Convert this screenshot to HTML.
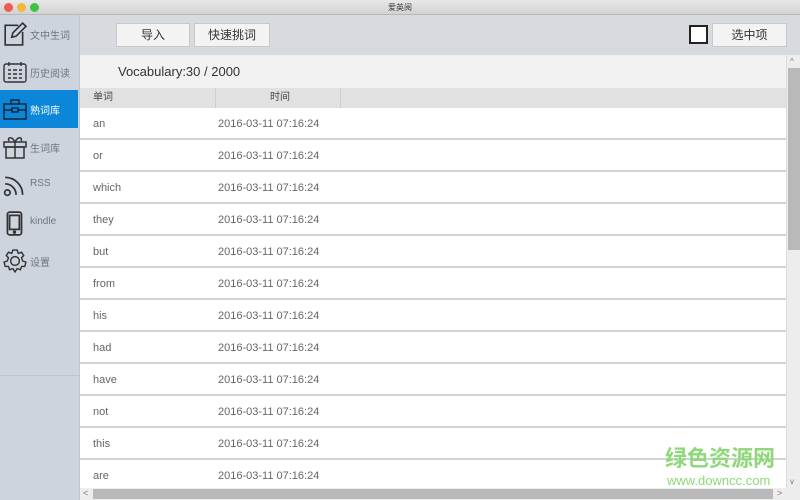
<!DOCTYPE html>
<html><head><meta charset="utf-8"><style>
*{margin:0;padding:0;box-sizing:border-box}
body{width:800px;height:500px;overflow:hidden;font-family:"Liberation Sans","Noto Sans CJK SC",sans-serif;background:#fff;position:relative}
.title{position:absolute;left:0;top:0;width:800px;height:15px;background:linear-gradient(#e8e8e8,#d2d2d2);border-bottom:1px solid #b8b8b8;text-align:center;font-size:8px;line-height:15px;color:#333}
.dot{position:absolute;top:3px;width:9px;height:9px;border-radius:50%}
.side{position:absolute;left:0;top:15px;width:80px;height:485px;background:#cdd4dd;border-right:1px solid #bfc6cf}
.item{position:absolute;left:0;width:78px;height:38px;font-size:10px;color:#6f757c}
.item svg{position:absolute;left:3px;top:7px}
.item span{position:absolute;left:30px;top:12px}
.sel{background:#0c86d9;color:#fff}
.tb{position:absolute;left:80px;top:15px;width:720px;height:40px;background:#d7dbdf}
.btn{position:absolute;top:8px;height:24px;background:#f3f3f3;border:1px solid #c9c9c9;font-size:12px;color:#333;text-align:center;line-height:22px}
.vh{position:absolute;left:80px;top:55px;width:706px;height:33px;background:#f2f2f2;font-size:13px;color:#333;padding:9px 0 0 38px}
.th{position:absolute;left:80px;top:88px;width:706px;height:20px;background:#e1e1e1;font-size:10px;color:#444;line-height:20px}
.row{position:absolute;left:80px;width:706px;height:32px;border-bottom:2px solid #d2d2d2;font-size:11px;color:#666;line-height:32px;background:#fff}
.row b{font-weight:normal;position:absolute;left:13px}
.row i{font-style:normal;position:absolute;left:138px}
</style></head><body>
<div class="title">爱英阅
<div class="dot" style="left:4px;background:#ed5b55"></div>
<div class="dot" style="left:17px;background:#f4b73b"></div>
<div class="dot" style="left:30px;background:#3fc345"></div></div>
<div class="side">
<div style="position:absolute;left:0;top:360px;width:79px;border-top:1px solid #bcc3cc"></div>
<div class="item" style="top:0"><svg width="24" height="24" viewBox="0 0 22 22" fill="none" stroke="#333" stroke-width="1.5"><path d="M14 3H2v18h16V9"/><path d="M8 14l1-4 9-9 3 3-9 9z"/></svg><span>文中生词</span></div>
<div class="item" style="top:38px"><svg width="24" height="24" viewBox="0 0 24 22" fill="none" stroke="#333" stroke-width="1.4"><rect x="1" y="3" width="22" height="18" rx="2"/><path d="M6 1v4M18 1v4M5 9h3M10 9h4M16 9h3M5 13h3M10 13h4M16 13h3M5 17h3M10 17h4M16 17h3"/></svg><span>历史阅读</span></div>
<div class="item sel" style="top:75px"><svg width="24" height="24" viewBox="0 0 24 22" fill="none" stroke="#13273a" stroke-width="1.5"><rect x="1" y="6" width="22" height="15"/><path d="M8 6V2h8v4M1 12h8M15 12h8"/><rect x="9" y="10" width="6" height="4"/></svg><span>熟词库</span></div>
<div class="item" style="top:113px"><svg width="24" height="24" viewBox="0 0 24 24" fill="none" stroke="#333" stroke-width="1.5"><rect x="1" y="7" width="22" height="5"/><rect x="3" y="12" width="18" height="11"/><path d="M12 7v16M12 7C9 1 4 2 6 6M12 7c3-6 8-5 6-1"/></svg><span>生词库</span></div>
<div class="item" style="top:151px"><svg width="24" height="24" viewBox="0 0 22 22" fill="none" stroke="#333" stroke-width="1.6"><circle cx="4" cy="18" r="2.5"/><path d="M2 10a10 10 0 0 1 10 10M2 4a16 16 0 0 1 16 16"/></svg><span>RSS</span></div>
<div class="item" style="top:189px"><svg width="24" height="26" viewBox="0 0 22 24" fill="none" stroke="#333" stroke-width="1.6"><rect x="4" y="1" width="13" height="21" rx="2"/><path d="M6 4h9v13H6z"/><circle cx="10.5" cy="19.5" r=".8" fill="#333"/></svg><span>kindle</span></div>
<div class="item" style="top:227px"><svg width="24" height="24" viewBox="0 0 22 22" fill="none" stroke="#333" stroke-width="1.3"><circle cx="11" cy="11" r="4"/><path d="M9 1h4l1 3 3-1 2 3-2 2 1 3 3 1-1 4-3 0-1 3-3-1-2 3-2-3-3 1-1-3-3 0-1-4 3-1 1-3-2-2 2-3 3 1z"/></svg><span>设置</span></div>
</div>
<div class="tb">
<div class="btn" style="left:36px;width:74px">导入</div>
<div class="btn" style="left:114px;width:76px">快速挑词</div>
<div style="position:absolute;left:609px;top:10px;width:19px;height:19px;border:2px solid #222;background:#fff"></div>
<div class="btn" style="left:632px;width:75px">选中项</div>
</div>
<div class="vh">Vocabulary:30 / 2000</div>
<div class="th"><span style="position:absolute;left:13px">单词</span><span style="position:absolute;left:190px">时间</span><div style="position:absolute;left:135px;top:0;height:20px;border-left:1px solid #cfcfcf"></div><div style="position:absolute;left:260px;top:0;height:20px;border-left:1px solid #cfcfcf"></div></div>
<div class="row" style="top:108px"><b>an</b><i>2016-03-11 07:16:24</i></div>
<div class="row" style="top:140px"><b>or</b><i>2016-03-11 07:16:24</i></div>
<div class="row" style="top:172px"><b>which</b><i>2016-03-11 07:16:24</i></div>
<div class="row" style="top:204px"><b>they</b><i>2016-03-11 07:16:24</i></div>
<div class="row" style="top:236px"><b>but</b><i>2016-03-11 07:16:24</i></div>
<div class="row" style="top:268px"><b>from</b><i>2016-03-11 07:16:24</i></div>
<div class="row" style="top:300px"><b>his</b><i>2016-03-11 07:16:24</i></div>
<div class="row" style="top:332px"><b>had</b><i>2016-03-11 07:16:24</i></div>
<div class="row" style="top:364px"><b>have</b><i>2016-03-11 07:16:24</i></div>
<div class="row" style="top:396px"><b>not</b><i>2016-03-11 07:16:24</i></div>
<div class="row" style="top:428px"><b>this</b><i>2016-03-11 07:16:24</i></div>
<div class="row" style="top:460px;border:0"><b>are</b><i>2016-03-11 07:16:24</i></div>
<div style="position:absolute;left:786px;top:55px;width:14px;height:433px;background:#ededed;border-left:1px solid #ddd"><div style="position:absolute;top:2px;left:3px;font-size:8px;color:#777">^</div><div style="position:absolute;left:1px;top:13px;width:12px;height:182px;background:#b9b9b9"></div><div style="position:absolute;bottom:2px;left:3px;font-size:8px;color:#777">v</div></div>
<div style="position:absolute;left:80px;top:488px;width:720px;height:12px;background:#ededed"><div style="position:absolute;left:3px;top:0;font-size:9px;color:#777">&lt;</div><div style="position:absolute;left:13px;top:1px;width:680px;height:10px;background:#b9b9b9"></div><div style="position:absolute;left:697px;top:0;font-size:9px;color:#777">&gt;</div></div>
<div style="position:absolute;left:665px;top:446px;font-size:22px;line-height:26px;font-weight:bold;color:#8fd87a">绿色资源网</div>
<div style="position:absolute;left:667px;top:474px;font-size:13px;line-height:14px;color:#8fd87a">www.downcc.com</div>
</body></html>
